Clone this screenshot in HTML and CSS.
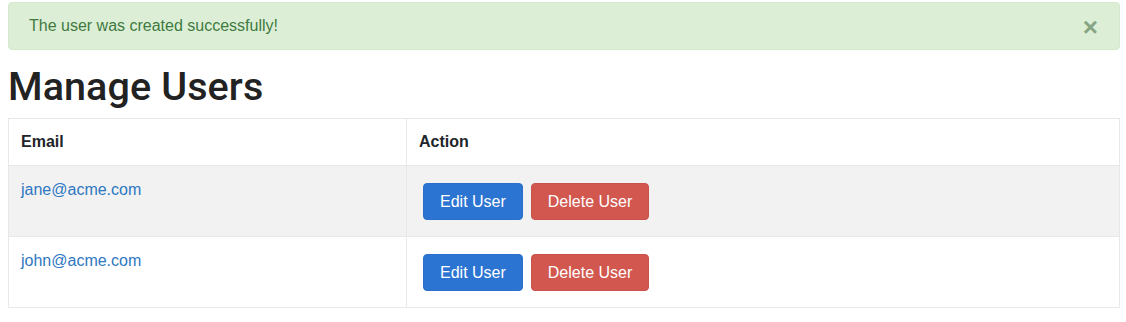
FILE: index.html
```html
<!DOCTYPE html>
<html lang="en">
<head>
<meta charset="utf-8">
<title>Manage Users</title>
<link rel="stylesheet" href="styles.css">
</head>
<body>
<main class="page">
  <div class="alert">
    <span class="alert-text">The user was created successfully!</span>
    <button class="alert-close" aria-label="Close">&times;</button>
  </div>
  <h1 class="title">Manage Users</h1>
  <table class="users">
    <thead>
      <tr><th class="col-email">Email</th><th>Action</th></tr>
    </thead>
    <tbody>
      <tr class="striped">
        <td><a href="#" class="link">jane@acme.com</a></td>
        <td><div class="actions"><button class="btn btn-primary">Edit User</button><button class="btn btn-danger">Delete User</button></div></td>
      </tr>
      <tr>
        <td><a href="#" class="link">john@acme.com</a></td>
        <td><div class="actions"><button class="btn btn-primary">Edit User</button><button class="btn btn-danger">Delete User</button></div></td>
      </tr>
    </tbody>
  </table>
</main>
</body>
</html>
```

FILE: styles.css
```css
* { box-sizing: border-box; }
html, body { margin: 0; background: #fff; }
body {
  font-family: "Liberation Sans", Arial, Helvetica, sans-serif;
  font-size: 16px;
  line-height: 1.5;
  color: #212529;
}
.page {
  padding: 2px 6px 0 8px;
}
.alert {
  display: flex;
  align-items: center;
  justify-content: space-between;
  height: 48px;
  padding: 0 21px 0 20px;
  background: #dcefd6;
  border: 1px solid #d3e9cc;
  border-radius: 4px;
  color: #3f7a3f;
}
.alert-text { font-size: 16px; }
.alert-close {
  background: none;
  border: 0;
  padding: 0;
  margin-top: 2px;
  font-family: "Liberation Sans", Arial, sans-serif;
  font-size: 26px;
  font-weight: 700;
  line-height: 1;
  color: #86a584;
  cursor: pointer;
}
.title {
  margin: 13px 0 8px;
  font-family: Roboto, "Liberation Sans", Arial, sans-serif;
  font-size: 39.5px;
  font-weight: 500;
  line-height: 1.2;
  color: #222;
  letter-spacing: 0.1px;
}
.users {
  width: 100%;
  border-collapse: collapse;
  border: 1px solid #e8e8e8;
}
.users th, .users td {
  border: 1px solid #e8e8e8;
  padding: 12px;
  text-align: left;
  vertical-align: top;
}
.users th {
  font-weight: 700;
  line-height: 22px;
}
.col-email { width: 398px; }
.striped { background: #f2f2f2; }
.link {
  color: #2e77c2;
  text-decoration: none;
  line-height: 22px;
}
.actions {
  display: flex;
  gap: 8px;
  margin: 5px 4px 4px;
}
.btn {
  font-family: "Liberation Sans", Arial, sans-serif;
  font-size: 16px;
  line-height: 24px;
  height: 37px;
  padding: 6px 16px;
  border: 1px solid transparent;
  border-radius: 4px;
  color: #fff;
  cursor: pointer;
}
.btn-primary { background: #2c74d1; border-color: #2a6fc9; }
.btn-danger { background: #d1574f; border-color: #c9524a; }
```
